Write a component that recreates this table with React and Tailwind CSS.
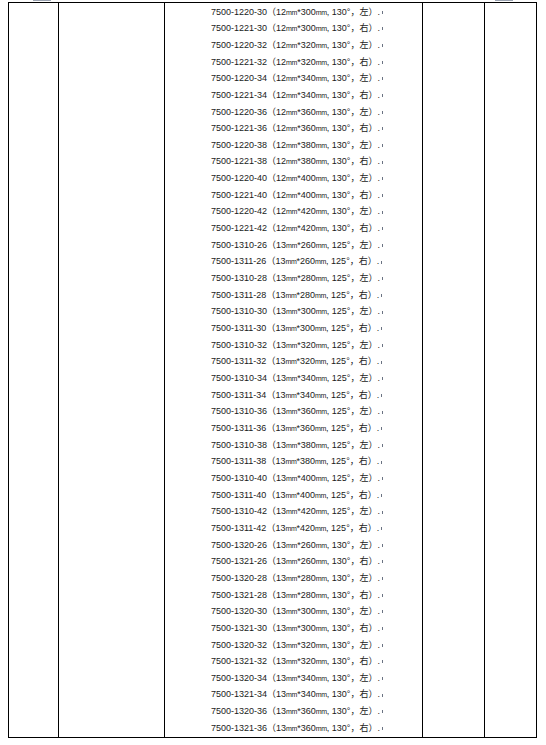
import React from 'react';

const buildRows = () => {
  const rows = [];
  // 12mm, 130° series
  for (let len = 30; len <= 42; len += 2) {
    rows.push({ code: `7500-1220-${len}`, d: 12, len: len * 10, ang: 130, side: '左' });
    rows.push({ code: `7500-1221-${len}`, d: 12, len: len * 10, ang: 130, side: '右' });
  }
  // 13mm, 125° series
  for (let len = 26; len <= 42; len += 2) {
    rows.push({ code: `7500-1310-${len}`, d: 13, len: len * 10, ang: 125, side: '左' });
    rows.push({ code: `7500-1311-${len}`, d: 13, len: len * 10, ang: 125, side: '右' });
  }
  // 13mm, 130° series
  for (let len = 26; len <= 36; len += 2) {
    rows.push({ code: `7500-1320-${len}`, d: 13, len: len * 10, ang: 130, side: '左' });
    rows.push({ code: `7500-1321-${len}`, d: 13, len: len * 10, ang: 130, side: '右' });
  }
  return rows;
};

const Mm = () => <span className="text-[7px] tracking-[-0.3px]">mm</span>;

export default function App() {
  const rows = buildRows();

  return (
    <div className="relative w-[546px] h-[745px] bg-white overflow-hidden">
      {/* page corner marks */}
      <div className="absolute left-[33px] top-0 w-[18px] h-px bg-gray-400" />
      <div className="absolute left-[495px] top-0 w-[18px] h-px bg-gray-400" />

      <div className="pt-[2px] pl-[8px]">
        <table className="border-collapse w-[529px] h-[735px]">
          <tbody>
            <tr>
              <td className="w-[50px] border border-black p-0" />
              <td className="w-[106px] border border-black p-0" />
              <td className="w-[258px] border border-black p-0 align-top">
                <div
                  className="pl-[46px] pt-[1px] text-[9px] text-[#1a1a1a] whitespace-nowrap"
                  style={{ fontFamily: '"Liberation Sans", "Noto Sans CJK SC", sans-serif' }}
                >
                  {rows.map((r) => (
                    <div key={r.code} className="h-[16.67px] flex items-center">
                      <span>
                        {r.code}（{r.d}<Mm />*{r.len}<Mm />, {r.ang}°，{r.side}）.
                      </span>
                      <span className="inline-block w-px h-[3px] bg-gray-500 ml-[2px]" />
                    </div>
                  ))}
                </div>
              </td>
              <td className="w-[62px] border border-black p-0" />
              <td className="w-[52px] border border-black p-0" />
            </tr>
          </tbody>
        </table>
      </div>
    </div>
  );
}
